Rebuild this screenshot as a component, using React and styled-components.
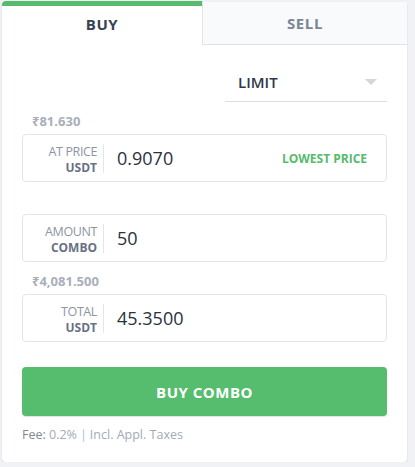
import React from "react";
import styled, { createGlobalStyle } from "styled-components";

const Global = createGlobalStyle`
  html, body { margin: 0; padding: 0; background: #f1f2f6; }
  body { font-family: "Open Sans", "Noto Sans", sans-serif; }
  * { box-sizing: border-box; }
`;

const Card = styled.div`
  margin: 1px 0 0 2px;
  width: 405px;
  background: #fff;
  border-radius: 4px;
  box-shadow: 0 1px 2px rgba(0, 0, 0, 0.12);
  overflow: hidden;
`;

const Tabs = styled.div`
  display: flex;
  height: 44px;
`;

const Tab = styled.div`
  flex: ${(p) => (p.$active ? "0 0 200px" : "1")};
  display: flex;
  align-items: center;
  justify-content: center;
  font-size: 15px;
  font-weight: 700;
  letter-spacing: 0.6px;
  color: ${(p) => (p.$active ? "#364152" : "#7c8696")};
  background: ${(p) => (p.$active ? "#fff" : "#f9fafc")};
  border-top: ${(p) => (p.$active ? "5px solid #55bb6d" : "1px solid #eef0f3")};
  border-left: ${(p) => (p.$active ? "none" : "1px solid #dfe2e7")};
  border-bottom: ${(p) => (p.$active ? "none" : "1px solid #dfe2e7")};
  padding-bottom: ${(p) => (p.$active ? "3px" : "0")};
`;

const Body = styled.div`
  padding: 0 20px 19px;
`;

const DropRow = styled.div`
  display: flex;
  justify-content: flex-end;
  margin-top: 17px;
`;

const Dropdown = styled.div`
  width: 162px;
  height: 40px;
  display: flex;
  align-items: center;
  justify-content: space-between;
  padding: 0 10px 0 13px;
  border-bottom: 1px solid #dcdfe4;
  font-size: 15px;
  font-weight: 600;
  color: #2f3848;
`;

const Caret = styled.span`
  width: 0;
  height: 0;
  border-left: 6px solid transparent;
  border-right: 6px solid transparent;
  border-top: 6px solid #d3d6dc;
`;

const Hint = styled.div`
  height: 16px;
  line-height: 16px;
  margin: 11px 0 5px 10px;
  font-size: 13px;
  font-weight: 700;
  color: #a9afba;
`;

const Field = styled.div`
  height: 48px;
  border: 1px solid #e1e4e8;
  border-radius: 4px;
  display: flex;
  align-items: center;
  padding-right: 19px;
`;

const Label = styled.div`
  width: 74px;
  text-align: right;
  display: flex;
  flex-direction: column;
  font-size: 12px;
  line-height: 16px;
  margin-top: 3px;
`;

const LabelTop = styled.span`
  color: #8d95a2;
  font-size: 12.5px;
  letter-spacing: -0.4px;
`;

const LabelUnit = styled.span`
  color: #687183;
  font-weight: 700;
`;

const Divider = styled.div`
  width: 1px;
  height: 29px;
  margin-left: 6px;
  background: #e3e5e9;
`;

const Value = styled.div`
  flex: 1;
  padding-left: 13px;
  font-size: 18px;
  color: #2a3140;
`;

const Action = styled.div`
  font-size: 12px;
  font-weight: 700;
  color: #55bb6d;
`;

const Button = styled.button`
  display: block;
  width: 100%;
  height: 49px;
  margin-top: 25px;
  border: none;
  border-radius: 4px;
  background: #56bd6e;
  box-shadow: 0 1px 1px rgba(0, 0, 0, 0.12);
  color: #fff;
  font-family: inherit;
  font-size: 15px;
  font-weight: 700;
  letter-spacing: 0.5px;
`;

const Fee = styled.div`
  margin-top: 11px;
  line-height: 16px;
  font-size: 12.5px;
  color: #a3aab6;
`;

const FeeKey = styled.span`
  color: #7f8898;
`;

const Sep = styled.span`
  color: #9fc4ec;
  margin: 0 3px;
`;

function InputField({ hint, label, unit, value, action }) {
  return (
    <>
      <Hint>{hint}</Hint>
      <Field>
        <Label>
          <LabelTop>{label}</LabelTop>
          <LabelUnit>{unit}</LabelUnit>
        </Label>
        <Divider />
        <Value>{value}</Value>
        {action && <Action>{action}</Action>}
      </Field>
    </>
  );
}

export default function App() {
  return (
    <>
      <Global />
      <Card>
        <Tabs>
          <Tab $active>BUY</Tab>
          <Tab>SELL</Tab>
        </Tabs>
        <Body>
          <DropRow>
            <Dropdown>
              LIMIT
              <Caret />
            </Dropdown>
          </DropRow>
          <InputField hint="₹81.630" label="AT PRICE" unit="USDT" value="0.9070" action="LOWEST PRICE" />
          <InputField hint="" label="AMOUNT" unit="COMBO" value="50" />
          <InputField hint="₹4,081.500" label="TOTAL" unit="USDT" value="45.3500" />
          <Button>BUY COMBO</Button>
          <Fee>
            <FeeKey>Fee:</FeeKey> 0.2%<Sep>|</Sep>Incl. Appl. Taxes
          </Fee>
        </Body>
      </Card>
    </>
  );
}
